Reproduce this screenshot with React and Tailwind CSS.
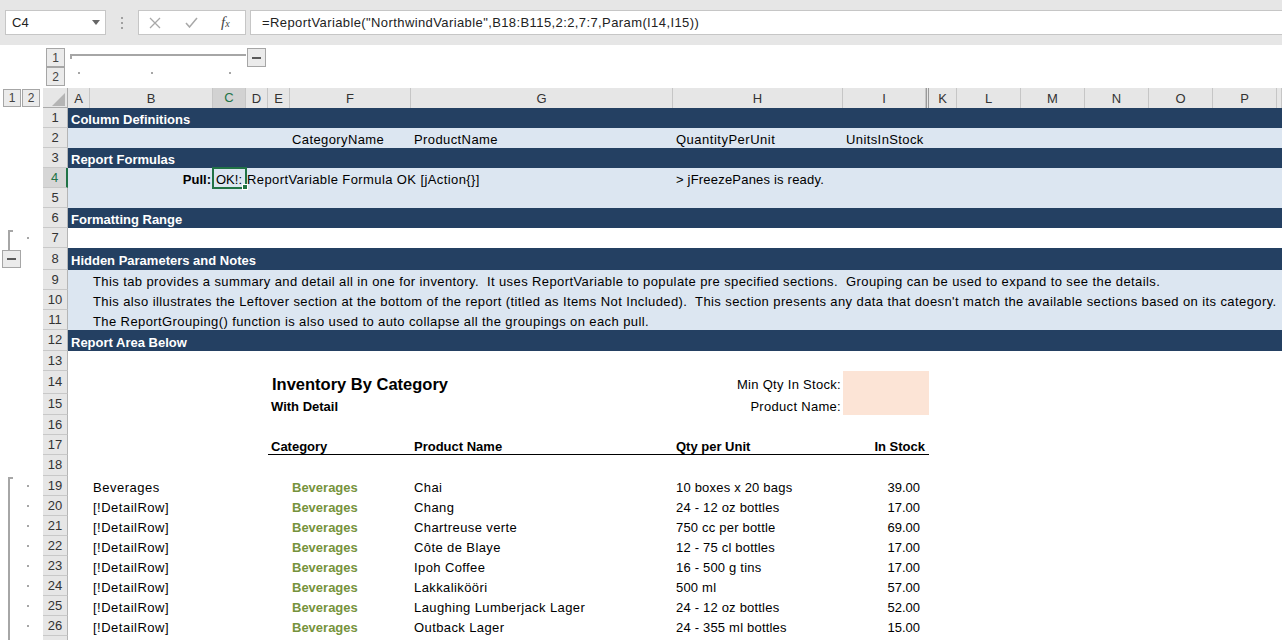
import React from 'react';

const GRID = 'grid grid-cols-[22px_123px_33px_22px_22px_121px_262px_170px_83px_3px_28px_64px_64px_64px_64px_64px_1fr]';

const HEADERS = ['A', 'B', 'C', 'D', 'E', 'F', 'G', 'H', 'I', '', 'K', 'L', 'M', 'N', 'O', 'P', ''];

const PRODUCTS = [
  ['Chai', '10 boxes x 20 bags', '39.00'],
  ['Chang', '24 - 12 oz bottles', '17.00'],
  ['Chartreuse verte', '750 cc per bottle', '69.00'],
  ['Côte de Blaye', '12 - 75 cl bottles', '17.00'],
  ['Ipoh Coffee', '16 - 500 g tins', '17.00'],
  ['Lakkalikööri', '500 ml', '57.00'],
  ['Laughing Lumberjack Lager', '24 - 12 oz bottles', '52.00'],
  ['Outback Lager', '24 - 355 ml bottles', '15.00'],
];

function OutlineBtn({ children, className = 'w-[19px] h-[19px]' }) {
  return (
    <div className={`${className} flex items-center justify-center border border-[#a6a6a6] bg-[#ebebeb] text-[12px] leading-none text-[#444]`}>
      {children}
    </div>
  );
}

function Minus() {
  return <div className="w-[9px] h-[2px] bg-[#595959]" />;
}

function Cell({ className = '', children }) {
  return (
    <div className={`row-start-1 flex items-end whitespace-pre text-[13px] leading-[15px] ${className}`}>
      {children}
    </div>
  );
}

function Row({ n, h = 'h-[20px]', bg = 'bg-white', gutter = null, sel = false, children }) {
  return (
    <div className={`flex ${h}`}>
      <div className="w-[43px] shrink-0 flex">{gutter}</div>
      <div
        className={`w-[25px] shrink-0 flex items-center justify-center border-b border-b-[#c8c8c8] text-[13px] ${
          sel ? 'bg-[#d6d6d6] text-[#217346] border-r-2 border-r-[#217346]' : 'bg-[#e6e6e6] text-[#333] border-r border-r-[#b5b5b5]'
        }`}
      >
        {n}
      </div>
      <div className={`${GRID} flex-1 ${bg}`}>{children}</div>
    </div>
  );
}

function Band({ n, h, title }) {
  return (
    <Row n={n} h={h} bg="bg-[#244062]">
      <Cell className="col-start-1 col-span-8 pl-[3px] pb-[1px] font-bold text-white">{title}</Cell>
    </Row>
  );
}

function GroupLine({ first = false, top = 'mt-[2px]' }) {
  return (
    <div className="flex h-full w-full items-center">
      {first ? (
        <div className={`ml-2 ${top} self-stretch w-[5px] border-l-2 border-t-2 border-[#a6a6a6]`} />
      ) : (
        <div className="ml-2 self-stretch w-[5px] border-l-2 border-[#a6a6a6]" />
      )}
      <div className="ml-[14px] w-[2px] h-[2px] bg-[#a6a6a6]" />
    </div>
  );
}

function FormulaBar() {
  return (
    <div className="h-[45px] bg-[#e6e6e6] flex pt-[10px]">
      <div className="ml-[5px] w-[101px] h-[25px] bg-white border border-[#c6c6c6] flex items-center justify-between pl-[6px] pr-[5px] text-[13px] text-[#222]">
        C4
        <svg width="8" height="5" viewBox="0 0 8 5">
          <polygon points="0,0 8,0 4,5" fill="#666" />
        </svg>
      </div>
      <div className="ml-[15px] mt-[7px] flex flex-col gap-[3px]">
        <div className="w-[2px] h-[2px] bg-[#a0a0a0]" />
        <div className="w-[2px] h-[2px] bg-[#a0a0a0]" />
        <div className="w-[2px] h-[2px] bg-[#a0a0a0]" />
      </div>
      <div className="ml-[15px] w-[108px] h-[25px] bg-white border border-[#c6c6c6] flex items-center">
        <svg className="ml-[10px]" width="12" height="12" viewBox="0 0 12 12">
          <path d="M1 1 L11 11 M11 1 L1 11" stroke="#a8a8a8" strokeWidth="1.3" fill="none" />
        </svg>
        <svg className="ml-[24px]" width="13" height="11" viewBox="0 0 13 11">
          <path d="M1 6 L4.5 10 L12 1" stroke="#a8a8a8" strokeWidth="1.5" fill="none" />
        </svg>
        <span className="ml-[23px] italic font-['Liberation_Serif',serif] text-[15px] text-[#444] leading-none">
          f<span className="text-[10px]">x</span>
        </span>
      </div>
      <div className="ml-[4px] flex-1 h-[25px] bg-white border border-[#c6c6c6] border-r-0 pl-[11px] flex items-center text-[13px] tracking-[0.4px] text-[#222] whitespace-pre">
        =ReportVariable("NorthwindVariable",B18:B115,2:2,7:7,Param(I14,I15))
      </div>
    </div>
  );
}

function OutlineArea() {
  return (
    <div className="flex h-[43px] bg-white">
      <div className="w-[43px] shrink-0" />
      <div className="w-[25px] shrink-0 flex flex-col items-center pt-[3px]">
        <OutlineBtn>1</OutlineBtn>
        <OutlineBtn>2</OutlineBtn>
      </div>
      <div className={`${GRID} grid-rows-[20px_16px] flex-1`}>
        <div className="col-start-1 col-span-3 row-start-1">
          <div className="ml-[2px] mt-[9px] h-[5px] border-t-2 border-l-2 border-[#a6a6a6]" />
        </div>
        <div className="col-start-4 col-span-2 row-start-1 pt-[3px] pl-[1px]">
          <OutlineBtn>
            <Minus />
          </OutlineBtn>
        </div>
        <div className="col-start-1 row-start-2 flex items-center justify-center">
          <div className="w-[2px] h-[2px] bg-[#a6a6a6]" />
        </div>
        <div className="col-start-2 row-start-2 flex items-center justify-center">
          <div className="w-[2px] h-[2px] bg-[#a6a6a6]" />
        </div>
        <div className="col-start-3 row-start-2 flex items-center justify-center">
          <div className="w-[2px] h-[2px] bg-[#a6a6a6]" />
        </div>
      </div>
    </div>
  );
}

function HeaderRow() {
  return (
    <div className="flex h-[20px]">
      <div className="w-[43px] shrink-0 flex items-center gap-[1px] pl-[3px]">
        <OutlineBtn className="w-[18px] h-[18px]">1</OutlineBtn>
        <OutlineBtn className="w-[18px] h-[18px]">2</OutlineBtn>
      </div>
      <div className="w-[25px] shrink-0 bg-[#e6e6e6] border-b border-r border-[#ababab] flex items-end justify-end pr-[2px] pb-[1px]">
        <svg width="13" height="13" viewBox="0 0 13 13">
          <polygon points="13,0 13,13 0,13" fill="#b4b4b4" />
        </svg>
      </div>
      <div className={`${GRID} flex-1 bg-[#e6e6e6]`}>
        {HEADERS.map((h, i) =>
          i === 2 ? (
            <div
              key={i}
              className="row-start-1 flex items-center justify-center text-[13px] text-[#217346] bg-[#d2d2d2] border-r border-r-[#c6c6c6] border-b-2 border-b-[#217346]"
            >
              {h}
            </div>
          ) : i === 9 ? (
            <div key={i} className="row-start-1 border-x border-x-[#9a9a9a] border-b border-b-[#ababab]" />
          ) : (
            <div
              key={i}
              className="row-start-1 flex items-center justify-center text-[13px] text-[#333] border-r border-r-[#c6c6c6] border-b border-b-[#ababab]"
            >
              {h}
            </div>
          )
        )}
      </div>
    </div>
  );
}

export default function App() {
  return (
    <div className="w-[1282px] h-[640px] overflow-hidden bg-white font-['Liberation_Sans',Arial,sans-serif] text-black">
      <FormulaBar />
      <OutlineArea />
      <HeaderRow />

      <Band n={1} title="Column Definitions" />
      <Row n={2} bg="bg-[#dce6f1]">
        <Cell className="col-start-6 pl-[2px] pb-[1px] tracking-[0.4px]">CategoryName</Cell>
        <Cell className="col-start-7 pl-[3px] pb-[1px] tracking-[0.4px]">ProductName</Cell>
        <Cell className="col-start-8 pl-[3px] pb-[1px] tracking-[0.5px]">QuantityPerUnit</Cell>
        <Cell className="col-start-9 pl-[3px] pb-[1px] tracking-[0.4px]">UnitsInStock</Cell>
      </Row>
      <Band n={3} title="Report Formulas" />
      <Row n={4} bg="bg-[#dce6f1]" sel>
        <Cell className="col-start-2 justify-end pr-[2px] pb-[1px] font-bold">Pull:</Cell>
        <Cell className="col-start-3 pl-[3px] pb-[1px] relative">
          OK!:
          <div className="absolute -inset-[1px] border-2 border-[#217346]">
            <div className="absolute -right-[3px] -bottom-[3px] w-[6px] h-[6px] bg-[#217346] border border-white" />
          </div>
        </Cell>
        <Cell className="col-start-4 pl-[1px] pb-[1px] tracking-[0.4px]">ReportVariable Formula OK [jAction{'{}'}]</Cell>
        <Cell className="col-start-8 pl-[3px] pb-[1px] tracking-[0.2px]">&gt; jFreezePanes is ready.</Cell>
      </Row>
      <Row n={5} bg="bg-[#dce6f1]" />
      <Band n={6} title="Formatting Range" />
      <Row n={7} gutter={<GroupLine first top="mt-[2px]" />} />
      <Row
        n={8}
        h="h-[22px]"
        bg="bg-[#244062]"
        gutter={
          <div className="flex flex-col">
            <div className="ml-2 h-[2px] border-l-2 border-[#a6a6a6]" />
            <div className="ml-[2px]">
              <OutlineBtn className="w-[19px] h-[18px]">
                <Minus />
              </OutlineBtn>
            </div>
          </div>
        }
      >
        <Cell className="col-start-1 col-span-8 pl-[3px] pb-[2px] font-bold text-white">Hidden Parameters and Notes</Cell>
      </Row>
      <Row n={9} bg="bg-[#dce6f1]">
        <Cell className="col-start-2 pl-[3px] pb-[1px] tracking-[0.4px]">
          This tab provides a summary and detail all in one for inventory.  It uses ReportVariable to populate pre specified sections.  Grouping can be used to expand to see the details.
        </Cell>
      </Row>
      <Row n={10} bg="bg-[#dce6f1]">
        <Cell className="col-start-2 pl-[3px] pb-[1px] tracking-[0.4px]">
          This also illustrates the Leftover section at the bottom of the report (titled as Items Not Included).  This section presents any data that doesn't match the available sections based on its category.
        </Cell>
      </Row>
      <Row n={11} bg="bg-[#dce6f1]">
        <Cell className="col-start-2 pl-[3px] pb-[1px] tracking-[0.4px]">
          The ReportGrouping() function is also used to auto collapse all the groupings on each pull.
        </Cell>
      </Row>
      <Band n={12} h="h-[21px]" title="Report Area Below" />
      <Row n={13} />
      <Row n={14} h="h-[23px]">
        <Cell className="col-start-5 pl-[4px] font-bold text-[16.5px] leading-[19px]">Inventory By Category</Cell>
        <Cell className="col-start-8 justify-end pr-[2px] pb-[2px] tracking-[0.3px]">Min Qty In Stock:</Cell>
        <Cell className="col-start-9 col-span-2 bg-[#fce4d6]" />
      </Row>
      <Row n={15} h="h-[21px]">
        <Cell className="col-start-5 pl-[3px] pb-[1px] font-bold">With Detail</Cell>
        <Cell className="col-start-8 justify-end pr-[2px] pb-[1px] tracking-[0.3px]">Product Name:</Cell>
        <Cell className="col-start-9 col-span-2 bg-[#fce4d6]" />
      </Row>
      <Row n={16} />
      <Row n={17}>
        <div className="row-start-1 col-start-5 col-span-6 border-b-2 border-black -mb-[1px]" />
        <Cell className="col-start-5 pl-[3px] pb-[1px] font-bold">Category</Cell>
        <Cell className="col-start-7 pl-[3px] pb-[1px] font-bold">Product Name</Cell>
        <Cell className="col-start-8 pl-[3px] pb-[1px] font-bold">Qty per Unit</Cell>
        <Cell className="col-start-9 justify-end pr-[1px] pb-[1px] font-bold">In Stock</Cell>
      </Row>
      <Row n={18} h="h-[21px]" />
      {PRODUCTS.map(([name, qty, stock], i) => (
        <Row key={name} n={19 + i} gutter={<GroupLine first={i === 0} top="mt-[1px]" />}>
          <Cell className="col-start-2 pl-[3px] pb-[1px] tracking-[0.5px]">{i === 0 ? 'Beverages' : '[!DetailRow]'}</Cell>
          <Cell className="col-start-6 pl-[2px] pb-[1px] font-bold text-[#76933c]">Beverages</Cell>
          <Cell className="col-start-7 pl-[3px] pb-[1px] tracking-[0.4px]">{name}</Cell>
          <Cell className="col-start-8 pl-[3px] pb-[1px] tracking-[0.2px]">{qty}</Cell>
          <Cell className="col-start-9 justify-end pr-[6px] pb-[1px]">{stock}</Cell>
        </Row>
      ))}
      <Row n="" gutter={<GroupLine />} />
    </div>
  );
}
